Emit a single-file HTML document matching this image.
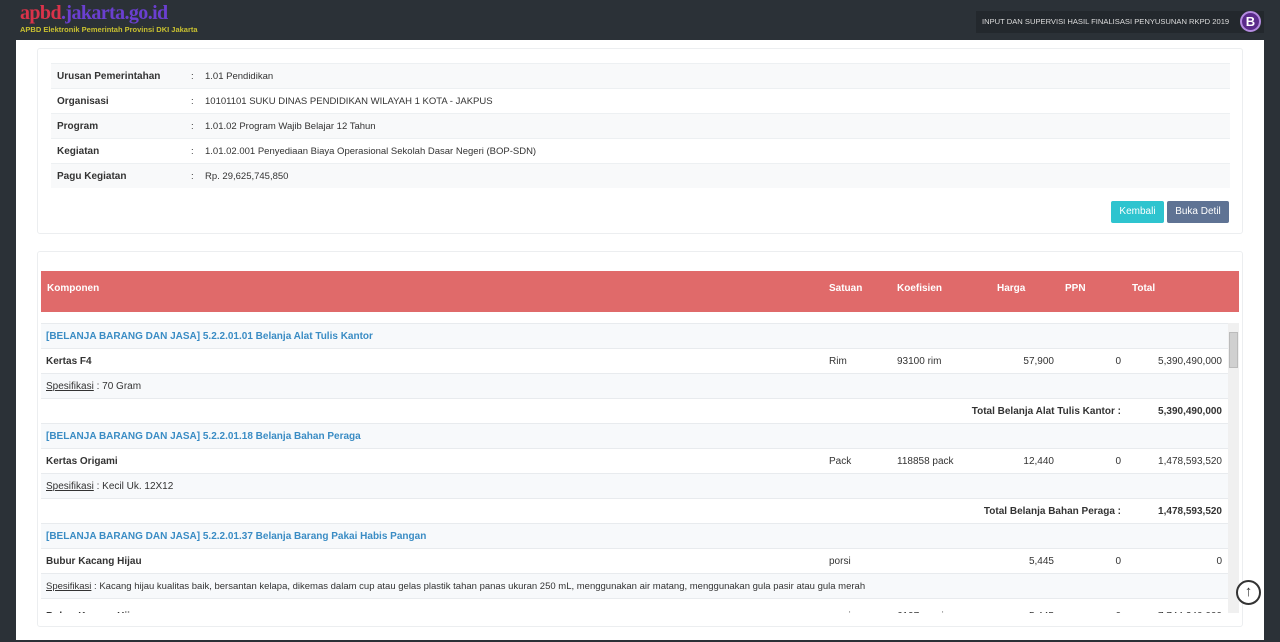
<!DOCTYPE html>
<html><head><style>
*{box-sizing:border-box;margin:0;padding:0}
body{width:1280px;height:642px;background:#2b3137;font-family:"Liberation Sans",sans-serif;font-size:10px;color:#333;position:relative;overflow:hidden}
.logo{position:absolute;left:20px;top:2px;font-family:"Liberation Serif",serif;font-size:20px;font-weight:bold;color:#6a3fd0;letter-spacing:-0.6px}
.logo span{color:#d9334a}
.sub{position:absolute;left:20px;top:25px;font-size:7.5px;color:#c8c030;font-weight:bold}
.hr{position:absolute;left:976px;top:11px;width:288px;height:22px;background:#23282d;color:#ddd;font-size:7.6px;line-height:22px;padding-left:6px;white-space:nowrap}
.bicon{position:absolute;left:1240px;top:11px;width:21px;height:21px;border-radius:50%;background:#5a2a8a;border:2px solid #b48be0;color:#fff;font-weight:bold;font-size:13px;text-align:center;line-height:17px}
.main{position:absolute;left:16px;top:40px;width:1248px;height:600px;background:#fff}
.card{position:absolute;border:1px solid #eceef0;border-radius:3px;background:#fff}
.info{position:absolute;width:1179px}
.info div{height:25px;line-height:25px;border-top:1px solid #edf0f2;background:#f8f9fa;position:relative;font-size:9.5px}
.info div:nth-child(even){background:#fff}
.info b{position:absolute;left:6px;font-size:10px}
.info i{position:absolute;left:140px;font-style:normal}
.info em{position:absolute;left:154px;font-style:normal}
.btn{position:absolute;height:22px;line-height:22px;color:#fff;font-size:10px;text-align:center;border-radius:2px}
.th{position:absolute;left:25px;top:231px;width:1198px;height:41px;background:#e06a6a;color:#fff;font-weight:bold;font-size:10px}
.th span{position:absolute;top:12px}
.body{position:absolute;left:25px;top:283px;width:1187px;height:290px;overflow:hidden}
.r{height:25px;line-height:25px;border-top:1px solid #e8ebee;position:relative;background:#fff}
.r.g{background:#f7f9fb}
.r span{position:absolute}
.grp{color:#3a8cc4;font-weight:bold;left:5px}
.sb{position:absolute;left:1212px;top:283px;width:11px;height:290px;background:#f0f0f0}
.thumb{position:absolute;left:1213px;top:292px;width:9px;height:36px;background:#d0d0d0;border:1px solid #bbb}
</style></head><body>
<div class="logo"><span>apbd</span>.jakarta.go.id</div>
<div class="sub">APBD Elektronik Pemerintah Provinsi DKI Jakarta</div>
<div class="hr">INPUT DAN SUPERVISI HASIL FINALISASI PENYUSUNAN RKPD 2019</div>
<div class="bicon">B</div>
<div class="main">
 <div class="card" style="left:21px;top:8px;width:1206px;height:186px">
  <div class="info" style="left:13px;top:14px">
   <div><b>Urusan Pemerintahan</b><i>:</i><em>1.01 Pendidikan</em></div>
   <div><b>Organisasi</b><i>:</i><em>10101101 SUKU DINAS PENDIDIKAN WILAYAH 1 KOTA - JAKPUS</em></div>
   <div><b>Program</b><i>:</i><em>1.01.02 Program Wajib Belajar 12 Tahun</em></div>
   <div><b>Kegiatan</b><i>:</i><em>1.01.02.001 Penyediaan Biaya Operasional Sekolah Dasar Negeri (BOP-SDN)</em></div>
   <div><b>Pagu Kegiatan</b><i>:</i><em>Rp. 29,625,745,850</em></div>
  </div>
  <div class="btn" style="left:1073px;top:152px;width:53px;background:#2ec4cf">Kembali</div>
  <div class="btn" style="left:1129px;top:152px;width:62px;background:#5f7394">Buka Detil</div>
 </div>
 <div class="card" style="left:21px;top:211px;width:1206px;height:376px"></div>
 <div class="th"><span style="left:6px">Komponen</span><span style="left:788px">Satuan</span><span style="left:856px">Koefisien</span><span style="left:956px">Harga</span><span style="left:1024px">PPN</span><span style="left:1091px">Total</span></div>
 <div class="body">
  <div class="r g"><span class="grp">[BELANJA BARANG DAN JASA] 5.2.2.01.01 Belanja Alat Tulis Kantor</span></div>
  <div class="r"><span style="left:5px;font-weight:bold">Kertas F4</span><span style="left:788px">Rim</span><span style="left:856px">93100 rim</span><span style="right:174px">57,900</span><span style="right:107px">0</span><span style="right:6px">5,390,490,000</span></div>
  <div class="r g"><span style="left:5px"><u>Spesifikasi</u> : 70 Gram</span></div>
  <div class="r"><span style="right:107px;font-weight:bold">Total Belanja Alat Tulis Kantor :</span><span style="right:6px;font-weight:bold">5,390,490,000</span></div>
  <div class="r g"><span class="grp">[BELANJA BARANG DAN JASA] 5.2.2.01.18 Belanja Bahan Peraga</span></div>
  <div class="r"><span style="left:5px;font-weight:bold">Kertas Origami</span><span style="left:788px">Pack</span><span style="left:856px">118858 pack</span><span style="right:174px">12,440</span><span style="right:107px">0</span><span style="right:6px">1,478,593,520</span></div>
  <div class="r g"><span style="left:5px"><u>Spesifikasi</u> : Kecil Uk. 12X12</span></div>
  <div class="r"><span style="right:107px;font-weight:bold">Total Belanja Bahan Peraga :</span><span style="right:6px;font-weight:bold">1,478,593,520</span></div>
  <div class="r g"><span class="grp">[BELANJA BARANG DAN JASA] 5.2.2.01.37 Belanja Barang Pakai Habis Pangan</span></div>
  <div class="r"><span style="left:5px;font-weight:bold">Bubur Kacang Hijau</span><span style="left:788px">porsi</span><span style="right:174px">5,445</span><span style="right:107px">0</span><span style="right:6px">0</span></div>
  <div class="r g"><span style="left:5px;font-size:9.5px"><u>Spesifikasi</u> : Kacang hijau kualitas baik, bersantan kelapa, dikemas dalam cup atau gelas plastik tahan panas ukuran 250 mL, menggunakan air matang, menggunakan gula pasir atau gula merah</span></div>
  <div class="r"><span style="left:5px;font-weight:bold;top:5px">Bubur Kacang Hijau</span><span style="left:788px;top:5px">porsi</span><span style="left:856px;top:5px">6197 porsi</span><span style="right:174px;top:5px">5,445</span><span style="right:107px;top:5px">0</span><span style="right:6px;top:5px">7,744,240,000</span></div>
 </div>
 <div class="sb"></div><div class="thumb"></div>
</div>
<div style="position:absolute;left:1236px;top:580px;width:25px;height:25px;border-radius:50%;border:2px solid #333;background:#fff;text-align:center;line-height:20px;font-size:15px;color:#333">↑</div>
</body></html>
